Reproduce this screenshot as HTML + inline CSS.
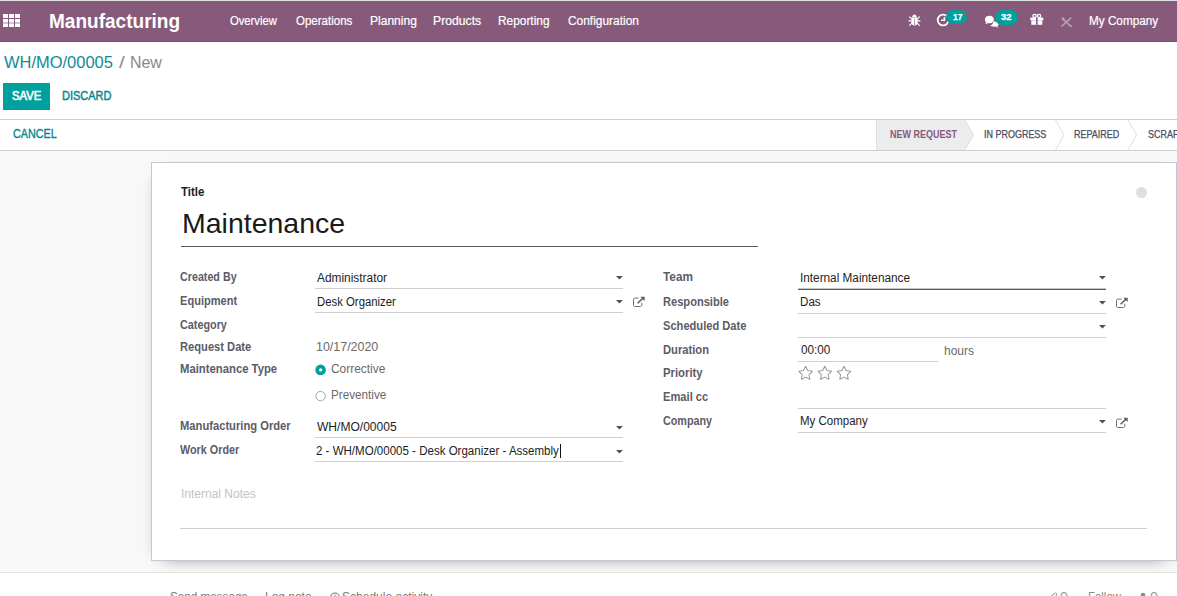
<!DOCTYPE html>
<html lang="en">
<head>
<meta charset="utf-8">
<title>Odoo - Maintenance Request</title>
<style>
*{box-sizing:border-box;margin:0;padding:0}
html,body{width:1177px;height:596px;overflow:hidden;background:#fff;font-family:"Liberation Sans",sans-serif}
body{position:relative}
.a,.t,svg{position:absolute}
.t{white-space:pre;line-height:1;transform-origin:0 0}
.ul{height:1px;background:#cfcfcf}
.car{width:0;height:0;border-left:3.8px solid transparent;border-right:3.8px solid transparent;border-top:3.6px solid #555}
</style>
</head>
<body>
<!-- top navbar -->
<div class="a" style="left:0;top:0;width:1177px;height:1px;background:#dfe2e0"></div>
<div class="a" style="left:0;top:1px;width:1177px;height:41px;background:#875a7b;border-bottom:1px solid #7a4f6f"></div>
<svg style="left:3px;top:14px" width="17" height="13" viewBox="0 0 17 13" shape-rendering="crispEdges"><rect x="0" y="0" width="5" height="4" fill="#fff"/><rect x="0" y="5" width="5" height="8" fill="#fff"/><rect x="0" y="8" width="5" height="2" fill="#cbc6ca"/><rect x="6" y="0" width="5" height="4" fill="#fff"/><rect x="6" y="5" width="5" height="8" fill="#fff"/><rect x="6" y="8" width="5" height="2" fill="#cbc6ca"/><rect x="12" y="0" width="5" height="4" fill="#fff"/><rect x="12" y="5" width="5" height="8" fill="#fff"/><rect x="12" y="8" width="5" height="2" fill="#cbc6ca"/></svg>
<!-- bug -->
<svg style="left:908px;top:14px" width="13" height="13" viewBox="0 0 13 13"><g fill="#fff" stroke="none"><path d="M4.3 3.2C4.3 1.6 5.2 0.5 6.5 0.5S8.7 1.6 8.7 3.2Z"/><path d="M3.4 3.6H9.6V8.6C9.6 10.6 8.3 11.6 6.5 11.6S3.4 10.6 3.4 8.6Z"/></g><g stroke="#fff" stroke-width="1.1" fill="none" stroke-linecap="round"><path d="M3.4 4.6L1.6 2.9M9.6 4.6L11.4 2.9M3.4 6.9H1M9.6 6.9H12M3.6 9.3L1.7 11.3M9.4 9.3L11.3 11.3"/></g><path d="M6.5 4.6V11" stroke="#a98ea1" stroke-width="0.9"/></svg>
<!-- clock -->
<svg style="left:936px;top:13px" width="14" height="14" viewBox="0 0 14 14"><circle cx="7.1" cy="7" r="5.4" fill="none" stroke="#fff" stroke-width="1.8"/><path d="M8.4 3.9V7.3H5" fill="none" stroke="#fff" stroke-width="1.5"/></svg>
<div class="a" style="left:946px;top:10px;width:21px;height:14px;border-radius:7px;background:#00a09d"></div>
<!-- comments -->
<svg style="left:984px;top:15px" width="16" height="13" viewBox="0 0 16 13"><g fill="#fff"><path d="M9.2 6.4C10.9 6.4 14.6 6.6 14.6 9C14.6 9.9 14 10.6 13.2 11.1C13.4 11.6 13.9 12 14.6 12.4C13.3 12.5 12.2 12.2 11.4 11.6C10.9 11.7 10.3 11.7 9.8 11.7C8.3 11.7 7 11.3 6.2 10.6C8 10 9.2 8.5 9.2 6.4Z"/><path d="M5.4 0.8C7.9 0.8 9.9 2.4 9.9 4.5S7.9 8.2 5.4 8.2C4.9 8.2 4.4 8.1 3.9 8C3.2 8.7 2.2 9.1 1 9.1C1.6 8.6 2 8 2.2 7.3C1.4 6.6 0.9 5.6 0.9 4.5C0.9 2.4 2.9 0.8 5.4 0.8Z"/></g></svg>
<div class="a" style="left:995px;top:10.4px;width:22.5px;height:14.4px;border-radius:7.2px;background:#00a09d"></div>
<!-- gift -->
<svg style="left:1030px;top:13px" width="14" height="13" viewBox="0 0 14 13"><g fill="#fff"><rect x="0.3" y="4.6" width="13" height="2.7"/><rect x="1.3" y="7.3" width="11" height="4.5"/></g><g fill="none" stroke="#fff" stroke-width="1.3"><ellipse cx="4.6" cy="2.9" rx="1.7" ry="1.5"/><ellipse cx="9" cy="2.9" rx="1.7" ry="1.5"/></g><rect x="6.1" y="4.4" width="1.5" height="7.4" fill="#7b4f8a"/></svg>
<!-- wrench/cross (disabled) -->
<svg style="left:1060px;top:16px" width="13" height="12" viewBox="0 0 13 12"><g stroke="#b5a5b1" stroke-width="1.6" fill="none" stroke-linecap="round"><path d="M2 10L10.6 2.1"/><path d="M3.6 3.6L10.4 10"/></g><path d="M1.2 1.6L3.4 1.2L4.6 2.6L4.4 4.4L2.6 4.6L1.4 3.6L2.8 3Z" fill="#b5a5b1"/><circle cx="10.7" cy="10.2" r="1.1" fill="#b5a5b1"/></svg>


<!-- control panel -->
<div class="a" style="left:3px;top:83px;width:47px;height:27px;background:#00a09d"></div>
<div class="a" style="left:0;top:119px;width:1177px;height:1px;background:#cdcdcd"></div>
<div class="a" style="left:0;top:150px;width:1177px;height:1px;background:#c9ced5"></div>
<!-- statusbar -->
<svg style="left:870px;top:120px" width="307" height="30" viewBox="0 0 307 30">
<path d="M6.5 0H95L103.5 15L95 30H6.5Z" fill="#ebecee"/>
<path d="M6.5 0V30" stroke="#dcdfe3" stroke-width="1" fill="none"/>
<path d="M95 0L103.5 15L95 30" stroke="#dddfe2" stroke-width="1" fill="none"/>
<path d="M185.5 0L194 15L185.5 30" stroke="#dedede" stroke-width="1" fill="none"/>
<path d="M258 0L266.5 15L258 30" stroke="#dedede" stroke-width="1" fill="none"/>
</svg>
<!-- content -->
<div class="a" style="left:0;top:151px;width:1177px;height:421px;background:#f9f9f9"></div>
<div class="a" style="left:151px;top:162px;width:1026px;height:399px;background:#fff;border:1px solid #c3c9d2;box-shadow:0 5px 18px -12px rgba(0,0,0,.75)"></div>
<div class="a" style="left:0;top:572px;width:1177px;height:24px;background:#fff;border-top:1px solid #e2e2e2"></div>
<!-- kanban state dot -->
<div class="a" style="left:1136px;top:187px;width:11px;height:11px;border-radius:50%;background:#dcdfe3"></div>
<!-- title underline -->
<div class="a" style="left:181px;top:246px;width:577px;height:1px;background:#5a5a5a"></div>
<!-- left column underlines -->
<div class="a ul" style="left:315px;top:288px;width:308px"></div>
<div class="a ul" style="left:315px;top:312px;width:308px"></div>
<div class="a ul" style="left:315px;top:437px;width:308px"></div>
<div class="a ul" style="left:315px;top:461px;width:308px"></div>
<svg style="left:615.0px;top:275.0px" width="9" height="6" viewBox="0 0 9 6"><path d="M1 1H7.9L4.45 4.5Z" fill="#505050"/></svg>
<svg style="left:615.0px;top:299.0px" width="9" height="6" viewBox="0 0 9 6"><path d="M1 1H7.9L4.45 4.5Z" fill="#505050"/></svg>
<svg style="left:615.0px;top:425.0px" width="9" height="6" viewBox="0 0 9 6"><path d="M1 1H7.9L4.45 4.5Z" fill="#505050"/></svg>
<svg style="left:615.0px;top:449.0px" width="9" height="6" viewBox="0 0 9 6"><path d="M1 1H7.9L4.45 4.5Z" fill="#505050"/></svg>
<!-- right column underlines -->
<div class="a" style="left:798px;top:288px;width:308px;height:1px;background:#c4c4c4"></div>
<div class="a" style="left:798px;top:289px;width:308px;height:1px;background:#5c5c5c"></div>
<div class="a ul" style="left:798px;top:313px;width:308px"></div>
<div class="a ul" style="left:798px;top:337px;width:308px"></div>
<div class="a ul" style="left:798px;top:361px;width:140px"></div>
<div class="a ul" style="left:798px;top:408px;width:308px"></div>
<div class="a ul" style="left:798px;top:432px;width:308px"></div>
<svg style="left:1097.9px;top:275.0px" width="9" height="6" viewBox="0 0 9 6"><path d="M1 1H7.9L4.45 4.5Z" fill="#505050"/></svg>
<svg style="left:1097.9px;top:300.0px" width="9" height="6" viewBox="0 0 9 6"><path d="M1 1H7.9L4.45 4.5Z" fill="#505050"/></svg>
<svg style="left:1097.9px;top:324.0px" width="9" height="6" viewBox="0 0 9 6"><path d="M1 1H7.9L4.45 4.5Z" fill="#505050"/></svg>
<svg style="left:1097.9px;top:419.0px" width="9" height="6" viewBox="0 0 9 6"><path d="M1 1H7.9L4.45 4.5Z" fill="#505050"/></svg>
<!-- notes underline -->
<div class="a" style="left:180px;top:528px;width:967px;height:1px;background:#d0d0d4"></div>
<!-- text cursor -->
<div class="a" style="left:560px;top:444px;width:1px;height:14px;background:#111"></div>
<!-- radios -->
<svg style="left:314px;top:363px" width="14" height="14" viewBox="0 0 14 14"><circle cx="6.6" cy="6.9" r="5.3" fill="#00a09d"/><circle cx="6.6" cy="6.9" r="1.7" fill="#eef6f6"/></svg>
<svg style="left:314px;top:389px" width="14" height="14" viewBox="0 0 14 14"><circle cx="6.6" cy="7.1" r="4.7" fill="#fff" stroke="#a4a8ae" stroke-width="1"/></svg>
<!-- external link icons -->
<svg class="ext" style="left:632px;top:296px" width="14" height="12" viewBox="0 0 14 12"><path d="M9.8 6.8V9C9.8 9.9 9.2 10.5 8.3 10.5H3C2.1 10.5 1.5 9.9 1.5 9V3.6C1.5 2.7 2.1 2.1 3 2.1H6.6" fill="none" stroke="#667080" stroke-width="1"/><path d="M5.6 7.3L11.6 1.6" stroke="#5a6068" stroke-width="1.5" fill="none"/><path d="M8.3 0.7H12.7V5Z" fill="#5a6068"/></svg>
<svg class="ext" style="left:1115px;top:297px" width="14" height="12" viewBox="0 0 14 12"><path d="M9.8 6.8V9C9.8 9.9 9.2 10.5 8.3 10.5H3C2.1 10.5 1.5 9.9 1.5 9V3.6C1.5 2.7 2.1 2.1 3 2.1H6.6" fill="none" stroke="#667080" stroke-width="1"/><path d="M5.6 7.3L11.6 1.6" stroke="#5a6068" stroke-width="1.5" fill="none"/><path d="M8.3 0.7H12.7V5Z" fill="#5a6068"/></svg>
<svg class="ext" style="left:1115px;top:416.5px" width="14" height="12" viewBox="0 0 14 12"><path d="M9.8 6.8V9C9.8 9.9 9.2 10.5 8.3 10.5H3C2.1 10.5 1.5 9.9 1.5 9V3.6C1.5 2.7 2.1 2.1 3 2.1H6.6" fill="none" stroke="#667080" stroke-width="1"/><path d="M5.6 7.3L11.6 1.6" stroke="#5a6068" stroke-width="1.5" fill="none"/><path d="M8.3 0.7H12.7V5Z" fill="#5a6068"/></svg>
<!-- priority stars -->
<svg style="left:797px;top:364px" width="60" height="18" viewBox="0 0 60 18"><g fill="none" stroke="#9b9b9b" stroke-width="1.05" stroke-linejoin="round"><path d="M8.60 2.35L10.72 6.59L15.40 7.29L12.02 10.61L12.80 15.28L8.60 13.10L4.40 15.28L5.18 10.61L1.80 7.29L6.48 6.59Z"/><path d="M27.80 2.35L29.92 6.59L34.60 7.29L31.22 10.61L32.00 15.28L27.80 13.10L23.60 15.28L24.38 10.61L21.00 7.29L25.68 6.59Z"/><path d="M47.00 2.35L49.12 6.59L53.80 7.29L50.42 10.61L51.20 15.28L47.00 13.10L42.80 15.28L43.58 10.61L40.20 7.29L44.88 6.59Z"/></g></svg>
<!-- chatter icons -->
<svg style="left:329px;top:591.2px" width="12" height="12" viewBox="0 0 12 12"><circle cx="6" cy="6.4" r="4.4" fill="none" stroke="#7c7c7c" stroke-width="1.1"/><path d="M6 3.6V6.6H4.2" fill="none" stroke="#7c7c7c" stroke-width="1"/></svg>
<svg style="left:1047.5px;top:591.2px" width="12" height="12" viewBox="0 0 12 12"><path d="M2.5 6L6.5 2.4C7.8 1.3 9.6 3 8.4 4.3L4.6 8.2" fill="none" stroke="#a8a8a8" stroke-width="1.1"/></svg>
<svg style="left:1138px;top:591.2px" width="10" height="12" viewBox="0 0 10 12"><circle cx="5" cy="4" r="2.3" fill="#8c8c8c"/><path d="M0.8 12C0.8 8.5 2.5 7 5 7S9.2 8.5 9.2 12Z" fill="#8c8c8c"/></svg>

<div class="t" id="t0" style="left:49.10px;top:11.07px;font-size:20px;color:#fff;transform:scaleX(0.9514);font-weight:bold;">Manufacturing</div>
<div class="t" id="t1" style="left:229.72px;top:15.42px;font-size:12.5px;color:#fff;transform:scaleX(0.8982);-webkit-text-stroke:0.2px #fff;">Overview</div>
<div class="t" id="t2" style="left:296.12px;top:15.42px;font-size:12.5px;color:#fff;transform:scaleX(0.9207);-webkit-text-stroke:0.2px #fff;">Operations</div>
<div class="t" id="t3" style="left:369.82px;top:15.42px;font-size:12.5px;color:#fff;transform:scaleX(0.9639);-webkit-text-stroke:0.2px #fff;">Planning</div>
<div class="t" id="t4" style="left:432.92px;top:15.42px;font-size:12.5px;color:#fff;transform:scaleX(0.9768);-webkit-text-stroke:0.2px #fff;">Products</div>
<div class="t" id="t5" style="left:497.92px;top:15.42px;font-size:12.5px;color:#fff;transform:scaleX(0.9501);-webkit-text-stroke:0.2px #fff;">Reporting</div>
<div class="t" id="t6" style="left:567.53px;top:15.42px;font-size:12.5px;color:#fff;transform:scaleX(0.9533);-webkit-text-stroke:0.2px #fff;">Configuration</div>
<div class="t" id="t7" style="left:1089.12px;top:15.02px;font-size:12.5px;color:#fff;transform:scaleX(0.9383);-webkit-text-stroke:0.2px #fff;">My Company</div>
<div class="t" id="t8" style="left:953.21px;top:12.30px;font-size:9.8px;color:#fff;transform:scaleX(0.8690);font-weight:bold;-webkit-text-stroke:0.25px #fff;">17</div>
<div class="t" id="t9" style="left:1001.41px;top:12.00px;font-size:9.8px;color:#fff;transform:scaleX(0.9710);font-weight:bold;-webkit-text-stroke:0.25px #fff;">32</div>
<div class="t" id="t10" style="left:4.48px;top:54.86px;font-size:16px;color:#108a94;transform:scaleX(1.0293);">WH/MO/00005</div>
<div class="t" id="t11" style="left:118.68px;top:54.86px;font-size:16px;color:#8a8a8a;transform:scaleX(1.2951);">/</div>
<div class="t" id="t12" style="left:130.48px;top:54.86px;font-size:16px;color:#8a8886;transform:scaleX(0.9961);">New</div>
<div class="t" id="t13" style="left:11.74px;top:89.69px;font-size:12.3px;color:#fff;transform:scaleX(0.9171);-webkit-text-stroke:0.6px #fff;">SAVE</div>
<div class="t" id="t14" style="left:61.74px;top:89.69px;font-size:12.3px;color:#00878a;transform:scaleX(0.8940);-webkit-text-stroke:0.45px #00878a;">DISCARD</div>
<div class="t" id="t15" style="left:13.14px;top:128.19px;font-size:12.3px;color:#00878a;transform:scaleX(0.8754);-webkit-text-stroke:0.35px #00878a;">CANCEL</div>
<div class="t" id="t16" style="left:890.34px;top:130.45px;font-size:10.1px;color:#875a7b;transform:scaleX(0.8916);font-weight:bold;">NEW REQUEST</div>
<div class="t" id="t17" style="left:984.14px;top:130.45px;font-size:10.1px;color:#4c4c5c;transform:scaleX(0.8893);-webkit-text-stroke:0.25px #4c4c5c;">IN PROGRESS</div>
<div class="t" id="t18" style="left:1073.93px;top:130.45px;font-size:10.1px;color:#4c4c5c;transform:scaleX(0.8898);-webkit-text-stroke:0.25px #4c4c5c;">REPAIRED</div>
<div class="t" id="t19" style="left:1147.93px;top:130.45px;font-size:10.1px;color:#4c4c5c;transform:scaleX(0.8900);-webkit-text-stroke:0.25px #4c4c5c;">SCRAP</div>
<div class="t" id="t20" style="left:181.14px;top:185.59px;font-size:12.3px;color:#1c1c2c;transform:scaleX(0.9359);font-weight:bold;">Title</div>
<div class="t" id="t21" style="left:181.84px;top:210.30px;font-size:28px;color:#1a1a1a;transform:scaleX(1.0175);">Maintenance</div>
<div class="t" id="t22" style="left:179.74px;top:270.79px;font-size:12.3px;color:#5c5c68;transform:scaleX(0.8718);font-weight:bold;">Created By</div>
<div class="t" id="t23" style="left:179.74px;top:294.69px;font-size:12.3px;color:#5c5c68;transform:scaleX(0.8997);font-weight:bold;">Equipment</div>
<div class="t" id="t24" style="left:179.74px;top:318.89px;font-size:12.3px;color:#5c5c68;transform:scaleX(0.8795);font-weight:bold;">Category</div>
<div class="t" id="t25" style="left:179.74px;top:340.79px;font-size:12.3px;color:#5c5c68;transform:scaleX(0.9069);font-weight:bold;">Request Date</div>
<div class="t" id="t26" style="left:179.74px;top:363.39px;font-size:12.3px;color:#5c5c68;transform:scaleX(0.9193);font-weight:bold;">Maintenance Type</div>
<div class="t" id="t27" style="left:179.74px;top:419.79px;font-size:12.3px;color:#5c5c68;transform:scaleX(0.9100);font-weight:bold;">Manufacturing Order</div>
<div class="t" id="t28" style="left:179.74px;top:444.19px;font-size:12.3px;color:#5c5c68;transform:scaleX(0.8789);font-weight:bold;">Work Order</div>
<div class="t" id="t29" style="left:662.64px;top:270.79px;font-size:12.3px;color:#5c5c68;transform:scaleX(0.9602);font-weight:bold;">Team</div>
<div class="t" id="t30" style="left:662.64px;top:296.39px;font-size:12.3px;color:#5c5c68;transform:scaleX(0.9022);font-weight:bold;">Responsible</div>
<div class="t" id="t31" style="left:662.64px;top:319.59px;font-size:12.3px;color:#5c5c68;transform:scaleX(0.9037);font-weight:bold;">Scheduled Date</div>
<div class="t" id="t32" style="left:662.64px;top:344.19px;font-size:12.3px;color:#5c5c68;transform:scaleX(0.9093);font-weight:bold;">Duration</div>
<div class="t" id="t33" style="left:662.64px;top:367.19px;font-size:12.3px;color:#5c5c68;transform:scaleX(0.9214);font-weight:bold;">Priority</div>
<div class="t" id="t34" style="left:662.64px;top:391.19px;font-size:12.3px;color:#5c5c68;transform:scaleX(0.9072);font-weight:bold;">Email cc</div>
<div class="t" id="t35" style="left:662.64px;top:415.19px;font-size:12.3px;color:#5c5c68;transform:scaleX(0.8760);font-weight:bold;">Company</div>
<div class="t" id="t36" style="left:316.74px;top:271.69px;font-size:12.3px;color:#1d1d24;transform:scaleX(0.9675);">Administrator</div>
<div class="t" id="t37" style="left:316.74px;top:295.69px;font-size:12.3px;color:#1d1d24;transform:scaleX(0.9232);">Desk Organizer</div>
<div class="t" id="t38" style="left:315.74px;top:340.79px;font-size:12.3px;color:#6a6a6a;transform:scaleX(1.0118);">10/17/2020</div>
<div class="t" id="t39" style="left:331.04px;top:362.79px;font-size:12.3px;color:#6a6a6a;transform:scaleX(0.9684);">Corrective</div>
<div class="t" id="t40" style="left:331.04px;top:388.59px;font-size:12.3px;color:#6a6a6a;transform:scaleX(0.9512);">Preventive</div>
<div class="t" id="t41" style="left:316.54px;top:420.79px;font-size:12.3px;color:#1d1d24;transform:scaleX(0.9797);">WH/MO/00005</div>
<div class="t" id="t42" style="left:315.94px;top:444.59px;font-size:12.3px;color:#1d1d24;transform:scaleX(0.9377);">2 - WH/MO/00005 - Desk Organizer - Assembly</div>
<div class="t" id="t43" style="left:799.94px;top:271.69px;font-size:12.3px;color:#1d1d24;transform:scaleX(0.9575);">Internal Maintenance</div>
<div class="t" id="t44" style="left:799.94px;top:296.29px;font-size:12.3px;color:#1d1d24;transform:scaleX(0.9452);">Das</div>
<div class="t" id="t45" style="left:800.94px;top:343.89px;font-size:12.3px;color:#1d1d24;transform:scaleX(0.9513);">00:00</div>
<div class="t" id="t46" style="left:943.94px;top:344.59px;font-size:12.3px;color:#6a6a6a;transform:scaleX(0.9776);">hours</div>
<div class="t" id="t47" style="left:799.94px;top:415.19px;font-size:12.3px;color:#1d1d24;transform:scaleX(0.9342);">My Company</div>
<div class="t" id="t48" style="left:181.14px;top:487.59px;font-size:12.3px;color:#c3c3c3;transform:scaleX(0.9754);">Internal Notes</div>
<div class="t" id="t49" style="left:169.74px;top:591.09px;font-size:12.3px;color:#7c7c7c;transform:scaleX(0.9492);">Send message</div>
<div class="t" id="t50" style="left:265.34px;top:591.09px;font-size:12.3px;color:#7c7c7c;transform:scaleX(0.9729);">Log note</div>
<div class="t" id="t51" style="left:341.74px;top:591.09px;font-size:12.3px;color:#7c7c7c;transform:scaleX(0.9783);">Schedule activity</div>
<div class="t" id="t52" style="left:1059.64px;top:591.19px;font-size:12.3px;color:#999;transform:scaleX(1.1654);">0</div>
<div class="t" id="t53" style="left:1088.14px;top:591.19px;font-size:12.3px;color:#8a8a8a;transform:scaleX(0.9277);">Follow</div>
<div class="t" id="t54" style="left:1149.64px;top:591.19px;font-size:12.3px;color:#999;transform:scaleX(1.1654);">0</div>
</body>
</html>
